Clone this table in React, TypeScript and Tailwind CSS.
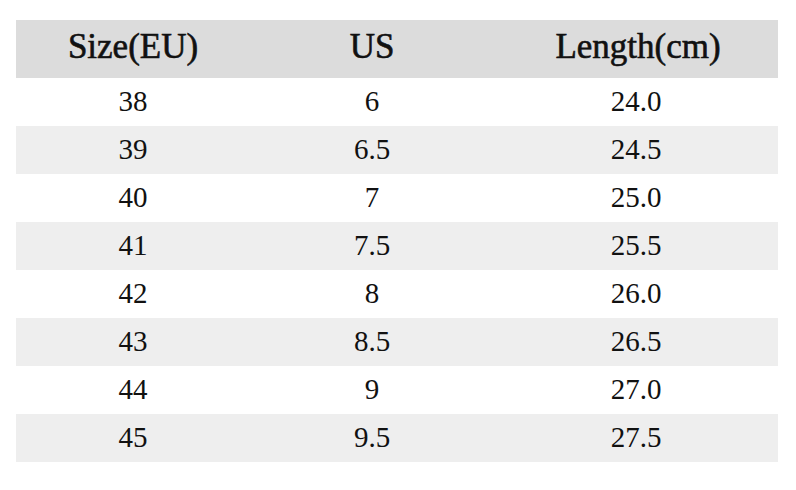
const rows: [string, string, string][] = [
  ['38', '6', '24.0'],
  ['39', '6.5', '24.5'],
  ['40', '7', '25.0'],
  ['41', '7.5', '25.5'],
  ['42', '8', '26.0'],
  ['43', '8.5', '26.5'],
  ['44', '9', '27.0'],
  ['45', '9.5', '27.5'],
]

export default function App() {
  return (
    <div className="w-[796px] h-[490px] bg-white pt-5 px-4" style={{ fontFamily: '"Liberation Serif", serif' }}>
      <div className="w-[762px] text-[#111]">
        {/* Header */}
        <div className="grid grid-cols-[234px_244px_1fr] h-[58px] items-center pb-1 bg-[#dcdcdc] text-[35px] [-webkit-text-stroke:0.6px_#111]">
          <div className="text-center">Size(EU)</div>
          <div className="text-center">US</div>
          <div className="text-center pl-1">Length(cm)</div>
        </div>

        {/* Body */}
        {rows.map(([eu, us, len], i) => (
          <div
            key={eu}
            className={`grid grid-cols-[234px_244px_1fr] h-[48px] items-center text-[29px] ${i % 2 === 1 ? 'bg-[#eeeeee]' : 'bg-white'}`}
          >
            <div className="text-center">{eu}</div>
            <div className="text-center">{us}</div>
            <div className="text-center">{len}</div>
          </div>
        ))}
      </div>
    </div>
  )
}
